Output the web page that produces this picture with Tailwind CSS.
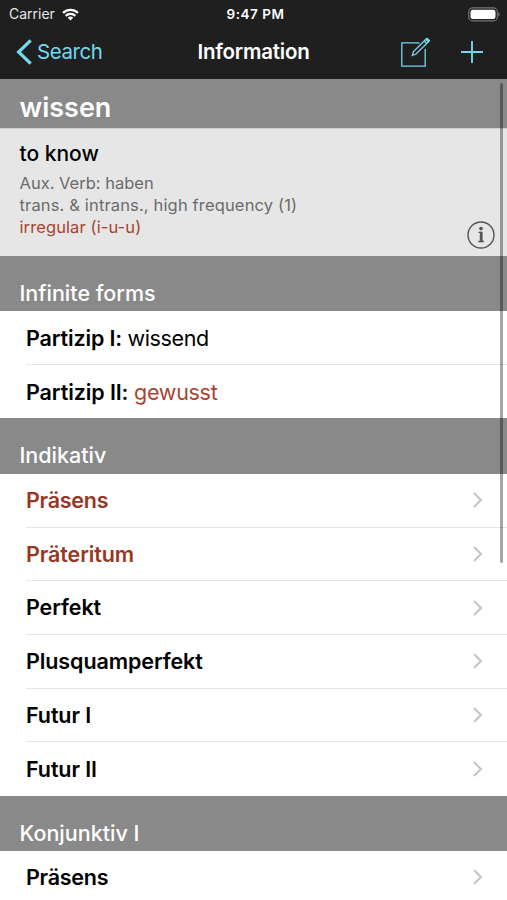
<!DOCTYPE html>
<html lang="en">
<head>
<meta charset="utf-8">
<title>Information</title>
<script src="https://cdn.jsdelivr.net/npm/@tailwindcss/browser@4"></script>
</head>
<body class="relative h-[900px] w-[507px] overflow-hidden bg-white font-['Inter','Liberation_Sans',sans-serif] text-black">
<header class="h-[79px] bg-[#1f1f1f] text-white">
  <div class="grid h-7 grid-cols-3 items-center pl-[9px] pr-[7px]">
    <div class="flex items-center gap-[7px]">
      <span class="text-[14px] leading-7 text-[#e6e6e6]">Carrier</span>
      <svg class="h-[13px] w-[17px]" viewBox="0 0 17 13" fill="none" stroke="#fff" stroke-width="2.2"><path d="M1 4.9a10.7 10.7 0 0 1 15 0M3.7 7.9a6.9 6.9 0 0 1 9.6 0"/><path d="M8.5 12.5 5.8 9.8a3.9 3.9 0 0 1 5.4 0z" fill="#fff" stroke="none"/></svg>
    </div>
    <span class="pl-[2px] text-center text-[13.5px] font-semibold leading-7 tracking-[.5px]">9:47 PM</span>
    <svg class="h-[15px] w-8 justify-self-end" viewBox="0 0 32 15"><rect x=".7" y=".9" width="28.6" height="13" rx="4" fill="none" stroke="#777" stroke-width="1.1"/><rect x="2.5" y="2.7" width="25" height="9.4" rx="2.3" fill="#fff"/><path d="M30.3 5.3q1.4.8 1.4 2.1t-1.4 2.1z" fill="#777"/></svg>
  </div>
  <div class="grid h-12 grid-cols-[1fr_auto_1fr] items-center pl-6 pr-6">
    <div class="-ml-2 flex items-center gap-[5px] text-[#71daef]">
      <svg class="h-[26px] w-4" viewBox="0 0 16 26" fill="none" stroke="currentColor" stroke-width="3.2"><path d="M14.7 1.3 2.6 13l12.1 11.7"/></svg>
      <span class="text-[20.5px] tracking-[-.45px]">Search</span>
    </div>
    <span class="text-[20.5px] font-semibold tracking-[-.2px]">Information</span>
    <div class="flex items-center justify-end gap-[31px] text-[#71daef]">
      <svg class="h-[30px] w-[30px]" viewBox="0 0 30 30" fill="none" stroke="currentColor" stroke-width="1.3"><path d="M19.5 5.8H1.8v23.3h23.4V12"/><path d="m12.3 18.5 1.2-4L26.2 2l2.5 2.5L16 17zM24.2 4l2.5 2.5"/><path d="m26 2.4 1.2-1 2.2 2.1-1.1 1.2z" fill="currentColor"/></svg>
      <svg class="h-[22px] w-[22px]" viewBox="0 0 22 22" fill="none" stroke="currentColor" stroke-width="1.9"><path d="M11 0v22M0 11h22"/></svg>
    </div>
  </div>
</header>
<main>
  <h1 class="h-[49px] bg-[#898989] pl-[19.5px] pt-[6px] text-[27px] font-semibold leading-[45px] text-white">wissen</h1>
  <section class="relative h-32 border-t border-[#d0d0d0] bg-[#e6e6e6] pl-[19.5px] pt-[9px]">
    <h2 class="text-[21px] font-medium leading-[32px]">to know</h2>
    <div class="pt-[2px] text-[16.5px] leading-[22px] text-[#6b6b6b]">
      <p>Aux. Verb: haben</p>
      <p class="tracking-[.15px]">trans. &amp; intrans., high frequency (1)</p>
      <p class="tracking-[.1px] text-[#a8432f]">irregular (i-u-u)</p>
    </div>
    <svg class="absolute right-3 bottom-[7px] size-7" viewBox="0 0 28 28" fill="none" stroke="#555"><circle cx="14" cy="14" r="13" stroke-width="1.4"/><circle cx="14" cy="7.6" r="1.8" fill="#555" stroke="none"/><path d="M11.5 11.3H14V20M11.3 20.5h5.6" stroke-width="1.3"/><path d="M14.2 10.8V20.8" stroke-width="2.8"/></svg>
  </section>

  <h3 class="h-[55px] bg-[#898989] pl-[19.5px] pt-[21px] text-[21.5px] font-medium leading-8 text-white">Infinite forms</h3>
  <div class="ml-[26px] h-[54px] border-b border-[#e4e4e4] text-[21.5px] leading-[55px] tracking-[-.4px]"><b class="font-semibold tracking-[-.15px]">Partizip I:</b> wissend</div>
  <div class="ml-[26px] h-[53px] text-[21.5px] leading-[54px] tracking-[-.3px]"><b class="font-semibold tracking-[-.1px]">Partizip II:</b> <span class="text-[#a8432f]">gewusst</span></div>

  <h3 class="h-14 bg-[#898989] pl-[19.5px] pt-[21px] text-[21.5px] font-medium leading-8 text-white">Indikativ</h3>
  <ul class="text-[21.5px] font-semibold leading-[53px] tracking-[-.1px]">
    <li class="ml-[26px] flex h-[53.7px] items-center justify-between border-b border-[#e4e4e4] pr-6 tracking-[-.25px] text-[#9a3622]">Präsens<svg class="h-4 w-[10px]" viewBox="0 0 10 16" fill="none" stroke="#c4c4c4" stroke-width="2"><path d="m1 1 7 7-7 7"/></svg></li>
    <li class="ml-[26px] flex h-[53.7px] items-center justify-between border-b border-[#e4e4e4] pr-6 text-[#9a3622]">Präteritum<svg class="h-4 w-[10px]" viewBox="0 0 10 16" fill="none" stroke="#c4c4c4" stroke-width="2"><path d="m1 1 7 7-7 7"/></svg></li>
    <li class="ml-[26px] flex h-[53.7px] items-center justify-between border-b border-[#e4e4e4] pr-6">Perfekt<svg class="h-4 w-[10px]" viewBox="0 0 10 16" fill="none" stroke="#c4c4c4" stroke-width="2"><path d="m1 1 7 7-7 7"/></svg></li>
    <li class="ml-[26px] flex h-[53.7px] items-center justify-between border-b border-[#e4e4e4] pr-6">Plusquamperfekt<svg class="h-4 w-[10px]" viewBox="0 0 10 16" fill="none" stroke="#c4c4c4" stroke-width="2"><path d="m1 1 7 7-7 7"/></svg></li>
    <li class="ml-[26px] flex h-[53.7px] items-center justify-between border-b border-[#e4e4e4] pr-6">Futur I<svg class="h-4 w-[10px]" viewBox="0 0 10 16" fill="none" stroke="#c4c4c4" stroke-width="2"><path d="m1 1 7 7-7 7"/></svg></li>
    <li class="ml-[26px] flex h-[53.5px] items-center justify-between pr-6">Futur II<svg class="h-4 w-[10px]" viewBox="0 0 10 16" fill="none" stroke="#c4c4c4" stroke-width="2"><path d="m1 1 7 7-7 7"/></svg></li>
  </ul>

  <h3 class="h-[55px] bg-[#898989] pl-[19.5px] pt-[21px] text-[21.5px] font-medium leading-8 text-white">Konjunktiv I</h3>
  <div class="ml-[26px] flex h-[53px] items-center justify-between pr-6 text-[21.5px] font-semibold leading-[53px] tracking-[-.25px]">Präsens<svg class="h-4 w-[10px]" viewBox="0 0 10 16" fill="none" stroke="#c4c4c4" stroke-width="2"><path d="m1 1 7 7-7 7"/></svg></div>
</main>
<div class="absolute left-[500px] top-[83px] h-[480px] w-[3px] rounded-full bg-black/35"></div>
</body>
</html>
